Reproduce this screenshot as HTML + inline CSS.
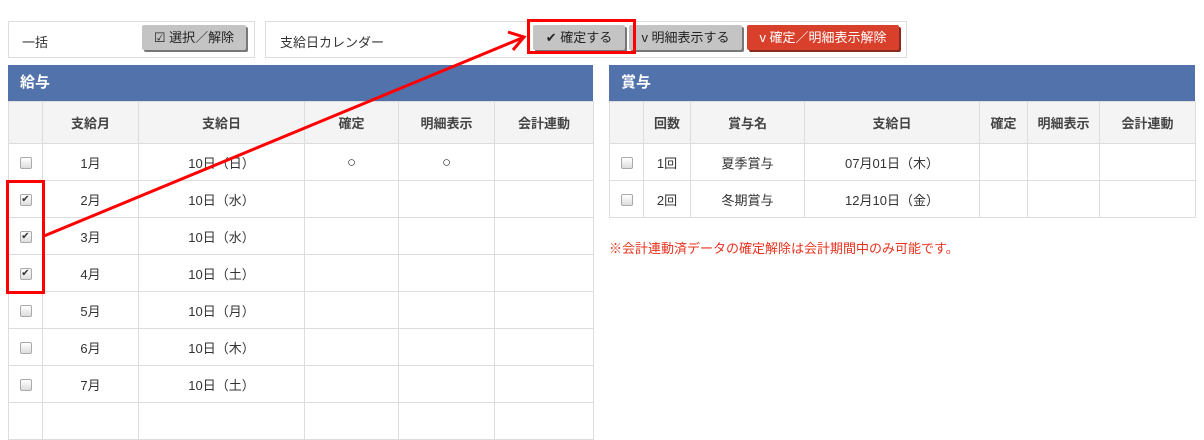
<!DOCTYPE html>
<html><head><meta charset="utf-8"><style>
*{box-sizing:border-box;margin:0;padding:0}
body{width:1204px;height:406px;background:#fff;position:relative;overflow:hidden;font-family:"Liberation Sans","Noto Sans CJK JP",sans-serif;font-size:13px;color:#333}
.abs{position:absolute}
.panel{border:1px solid #ddd;background:#fff}
.btn{position:absolute;height:25px;background:#c4c4c4;border-radius:2px;box-shadow:2px 2px 0 #777;font-size:13px;line-height:25px;text-align:center;color:#222}
.red{background:#d9402c;color:#fff;box-shadow:2px 2px 0 #8a2a1e}
.bar{position:absolute;height:36px;background:#5172aa;color:#fff;font-weight:bold;font-size:15px;line-height:36px;padding-left:12px}
table{position:absolute;border-collapse:collapse;table-layout:fixed}
td,th{border:1px solid #ddd;text-align:center;font-size:13px;height:37px;padding:0}
th{background:#f4f4f4;font-weight:bold;color:#444;height:42px}
.cb{display:inline-block;width:12px;height:12px;border:1px solid #aaa;border-radius:2px;background:linear-gradient(#fff,#ddd);vertical-align:middle;font-size:10px;line-height:10px;color:#333}
.o{font-size:15px}
</style></head><body>
<div class="abs panel" style="left:8px;top:21px;width:247px;height:37px"></div>
<div class="abs" style="left:22px;top:32px">一括</div>
<div class="btn" style="left:142px;top:25px;width:104px">☑ 選択／解除</div>
<div class="abs panel" style="left:265px;top:21px;width:642px;height:37px"></div>
<div class="abs" style="left:280px;top:32px">支給日カレンダー</div>
<div class="btn" style="left:533px;top:25px;width:92px">✔ 確定する</div>
<div class="btn" style="left:629px;top:25px;width:113px">v 明細表示する</div>
<div class="btn red" style="left:747px;top:25px;width:152px">v 確定／明細表示解除</div>

<div class="bar" style="left:8px;top:65px;width:585px">給与</div>
<table style="left:8px;top:101px;width:585px">
<colgroup><col style="width:34px"><col style="width:96px"><col style="width:166px"><col style="width:94px"><col style="width:96px"><col style="width:99px"></colgroup>
<tr><th></th><th>支給月</th><th>支給日</th><th>確定</th><th>明細表示</th><th>会計連動</th></tr>
<tr><td><span class="cb"></span></td><td>1月</td><td>10日（日）</td><td class="o">○</td><td class="o">○</td><td></td></tr>
<tr><td><span class="cb">✔</span></td><td>2月</td><td>10日（水）</td><td></td><td></td><td></td></tr>
<tr><td><span class="cb">✔</span></td><td>3月</td><td>10日（水）</td><td></td><td></td><td></td></tr>
<tr><td><span class="cb">✔</span></td><td>4月</td><td>10日（土）</td><td></td><td></td><td></td></tr>
<tr><td><span class="cb"></span></td><td>5月</td><td>10日（月）</td><td></td><td></td><td></td></tr>
<tr><td><span class="cb"></span></td><td>6月</td><td>10日（木）</td><td></td><td></td><td></td></tr>
<tr><td><span class="cb"></span></td><td>7月</td><td>10日（土）</td><td></td><td></td><td></td></tr>
<tr><td></td><td></td><td></td><td></td><td></td><td></td></tr>
</table>

<div class="bar" style="left:609px;top:65px;width:586px">賞与</div>
<table style="left:609px;top:101px;width:586px">
<colgroup><col style="width:34px"><col style="width:47px"><col style="width:114px"><col style="width:175px"><col style="width:48px"><col style="width:72px"><col style="width:96px"></colgroup>
<tr><th></th><th>回数</th><th>賞与名</th><th>支給日</th><th>確定</th><th>明細表示</th><th>会計連動</th></tr>
<tr><td><span class="cb"></span></td><td>1回</td><td>夏季賞与</td><td>07月01日（木）</td><td></td><td></td><td></td></tr>
<tr><td><span class="cb"></span></td><td>2回</td><td>冬期賞与</td><td>12月10日（金）</td><td></td><td></td><td></td></tr>
</table>
<div class="abs" style="left:609px;top:238px;color:#e8321e;font-size:13px">※会計連動済データの確定解除は会計期間中のみ可能です。</div>

<svg class="abs" style="left:0;top:0" width="1204" height="406">
<rect x="7.5" y="181.5" width="36" height="111" fill="none" stroke="#f00" stroke-width="3"/>
<rect x="528.5" y="20.5" width="106" height="32" fill="none" stroke="#f00" stroke-width="3"/>
<line x1="44" y1="236" x2="522" y2="38" stroke="#f00" stroke-width="3"/>
<polyline points="508,32 524,37 513,50" fill="none" stroke="#f00" stroke-width="3"/>
</svg>
</body></html>
